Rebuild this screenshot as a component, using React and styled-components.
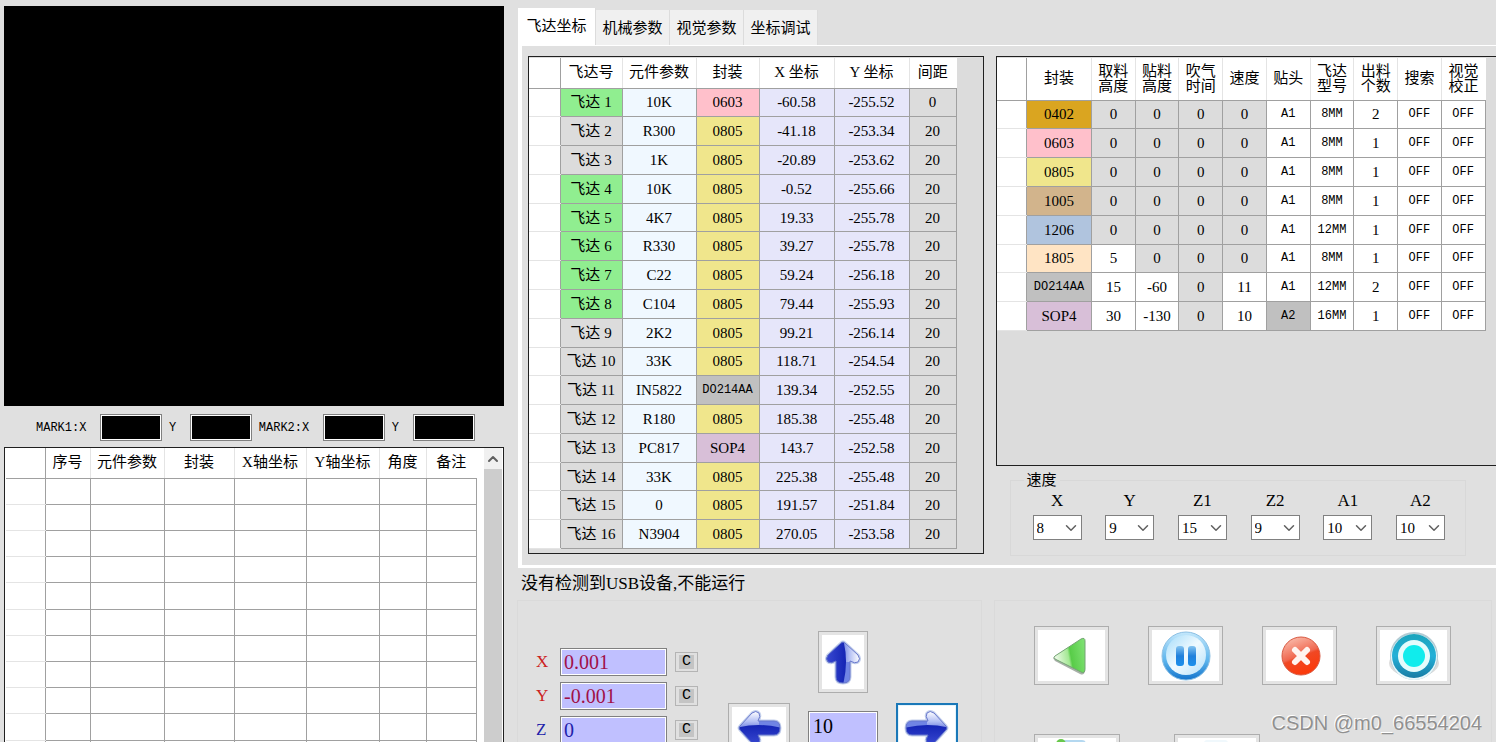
import { useState } from "react"
import styled, { createGlobalStyle } from "styled-components"
import { ChevronDown, ChevronUp } from "lucide-react"

const packageColors = {
    "0402": "#daa520",
    "0603": "#ffc0cb",
    "0805": "#f0e68c",
    "1005": "#d2b48c",
    "1206": "#b0c4de",
    "1805": "#ffe4c4",
    "DO214AA": "#c0c0c0",
    "SOP4": "#d8bfd8"
}

const tabs = ["飞达坐标", "机械参数", "视觉参数", "坐标调试"]

const feeders = [
    ["10K", "0603", "-60.58", "-255.52", "0", true],
    ["R300", "0805", "-41.18", "-253.34", "20", false],
    ["1K", "0805", "-20.89", "-253.62", "20", false],
    ["10K", "0805", "-0.52", "-255.66", "20", true],
    ["4K7", "0805", "19.33", "-255.78", "20", true],
    ["R330", "0805", "39.27", "-255.78", "20", true],
    ["C22", "0805", "59.24", "-256.18", "20", true],
    ["C104", "0805", "79.44", "-255.93", "20", true],
    ["2K2", "0805", "99.21", "-256.14", "20", false],
    ["33K", "0805", "118.71", "-254.54", "20", false],
    ["IN5822", "DO214AA", "139.34", "-252.55", "20", false],
    ["R180", "0805", "185.38", "-255.48", "20", false],
    ["PC817", "SOP4", "143.7", "-252.58", "20", false],
    ["33K", "0805", "225.38", "-255.48", "20", false],
    ["0", "0805", "191.57", "-251.84", "20", false],
    ["N3904", "0805", "270.05", "-253.58", "20", false]
]

const packages = [
    ["0402", "0", "0", "0", "0", "A1", "8MM", "2"],
    ["0603", "0", "0", "0", "0", "A1", "8MM", "1"],
    ["0805", "0", "0", "0", "0", "A1", "8MM", "1"],
    ["1005", "0", "0", "0", "0", "A1", "8MM", "1"],
    ["1206", "0", "0", "0", "0", "A1", "12MM", "1"],
    ["1805", "5", "0", "0", "0", "A1", "8MM", "1"],
    ["DO214AA", "15", "-60", "0", "11", "A1", "12MM", "2"],
    ["SOP4", "30", "-130", "0", "10", "A2", "16MM", "1"]
]

const speeds = [["X", "8"], ["Y", "9"], ["Z1", "15"], ["Z2", "9"], ["A1", "10"], ["A2", "10"]]

const axes = [
    { name: "X", value: "0.001", color: "#cc2222", ink: "#a01048" },
    { name: "Y", value: "-0.001", color: "#cc2222", ink: "#a01048" },
    { name: "Z", value: "0", color: "#2222aa", ink: "#2222aa" }
]

const arrowShape = "M17 4 Q19 2 21 4 L34 16 Q37 20 34 23 Q31 25 26 22 V38 Q26 44 19 44 Q12 44 12 38 V22 Q7 25 4 23 Q1 20 4 16Z"

const arrowTurns = {
    up: undefined,
    left: "translate(0 38) rotate(-90)",
    right: "translate(46 38) scale(-1 1) rotate(-90)"
}

function Arrow({ to }) {
    const width = to === "up" ? 38 : 46
    const height = to === "up" ? 46 : 38
    return (
        <svg width={width} height={height} viewBox={`0 0 ${width} ${height}`} aria-hidden="true">
            <defs>
                <linearGradient id={"light" + to} x1="0.4" x2="1" y1="0" y2="0">
                    <stop offset="0" stopColor="#5468d8" />
                    <stop offset="0.5" stopColor="#b4c0f4" />
                    <stop offset="1" stopColor="#ffffff" />
                </linearGradient>
                <linearGradient id={"dark" + to} x1="0" x2="1" y1="0" y2="0">
                    <stop offset="0" stopColor="#3c4cd4" />
                    <stop offset="1" stopColor="#1424b4" />
                </linearGradient>
                <clipPath id={"clip" + to}>
                    <path d={arrowShape} />
                </clipPath>
            </defs>
            <g transform={arrowTurns[to]}>
                <path d={arrowShape} fill="none" stroke="#c4d0ec" strokeWidth="3" />
                <path d={arrowShape} fill={"url(#light" + to + ")"} />
                <g clipPath={"url(#clip" + to + ")"}>
                    <rect x="18" y="23" width="9" height="22" fill="#7084e4" />
                    <path d="M0 0 H19 Q25 22 19 46 H0Z" fill={"url(#dark" + to + ")"} />
                </g>
                <path d={arrowShape} fill="none" stroke="#6878cc" />
            </g>
        </svg>
    )
}

function PlayBack() {
    return (
        <svg width="50" height="50" viewBox="0 0 50 50" aria-hidden="true">
            <defs>
                <linearGradient id="green" x1="0" x2="1" y1="0.6" y2="0.4">
                    <stop offset="0" stopColor="#f4fcf0" />
                    <stop offset="0.46" stopColor="#a4e894" />
                    <stop offset="0.54" stopColor="#58cc48" />
                    <stop offset="1" stopColor="#7ce070" />
                </linearGradient>
            </defs>
            <path d="M6 27 L8 30 L33 43 Q37 45 38 40 V12 L36 9Z" fill="#a8b0a8" />
            <path d="M8 25 L34 8 Q38 6 38 10 V38 Q38 43 34 41 L8 28 Q6 26 8 25Z" fill="url(#green)" stroke="#74a474" />
        </svg>
    )
}

function Pause() {
    return (
        <svg width="50" height="50" viewBox="0 0 50 50" aria-hidden="true">
            <defs>
                <linearGradient id="blueRing" x1="0" x2="0" y1="0" y2="1">
                    <stop offset="0" stopColor="#c4e8fc" />
                    <stop offset="0.6" stopColor="#5cb4ec" />
                    <stop offset="1" stopColor="#1474cc" />
                </linearGradient>
                <linearGradient id="blueFace" x1="0" x2="1" y1="0" y2="1">
                    <stop offset="0" stopColor="#a4dcfa" />
                    <stop offset="0.5" stopColor="#f0faff" />
                    <stop offset="1" stopColor="#b4e0fa" />
                </linearGradient>
                <linearGradient id="blueBar" x1="0" x2="0" y1="0" y2="1">
                    <stop offset="0" stopColor="#84c4f0" />
                    <stop offset="0.5" stopColor="#2080dc" />
                    <stop offset="1" stopColor="#1c90ec" />
                </linearGradient>
            </defs>
            <circle cx="25" cy="25" r="24" fill="url(#blueRing)" stroke="#8cc0e4" />
            <circle cx="25" cy="24" r="20" fill="url(#blueFace)" />
            <rect x="15" y="15" width="8" height="20" rx="3" fill="url(#blueBar)" />
            <rect x="27" y="15" width="8" height="20" rx="3" fill="url(#blueBar)" />
        </svg>
    )
}

function Cancel() {
    return (
        <svg width="50" height="50" viewBox="0 0 50 50" aria-hidden="true">
            <defs>
                <linearGradient id="red" x1="0.2" x2="0.6" y1="0" y2="1">
                    <stop offset="0" stopColor="#fac0b0" />
                    <stop offset="0.5" stopColor="#f06850" />
                    <stop offset="0.56" stopColor="#f04824" />
                    <stop offset="1" stopColor="#fc3808" />
                </linearGradient>
            </defs>
            <circle cx="26" cy="25" r="19" fill="url(#red)" stroke="#d85840" />
            <path d="M20 19 L32 31 M32 19 L20 31" stroke="#fff4f0" strokeWidth="6" strokeLinecap="round" />
        </svg>
    )
}

function Target() {
    return (
        <svg width="50" height="50" viewBox="0 0 50 50" aria-hidden="true">
            <defs>
                <linearGradient id="teal" x1="0" x2="0" y1="0" y2="1">
                    <stop offset="0" stopColor="#1ca4bc" />
                    <stop offset="0.5" stopColor="#24b0d8" />
                    <stop offset="1" stopColor="#187ca4" />
                </linearGradient>
            </defs>
            <ellipse cx="25" cy="32" rx="25" ry="14" fill="#dcdcdc" />
            <circle cx="25" cy="25" r="24" fill="#b4ccd4" />
            <circle cx="25" cy="26" r="23" fill="#e8f8fc" />
            <circle cx="25" cy="25" r="22" fill="url(#teal)" />
            <circle cx="25" cy="25" r="16" fill="#e4fcfc" />
            <circle cx="25" cy="25" r="11" fill="#10ecec" />
        </svg>
    )
}

function Marks() {
    return (
        <MarkRow>
            {["MARK1:X", "Y", "MARK2:X", "Y"].map((value, index) => (
                <MarkLabel key={index}>
                    <span>{value}</span>
                    <MarkInput readOnly />
                </MarkLabel>
            ))}
        </MarkRow>
    )
}

function PlacementList() {
    return (
        <ListPanel>
            <PlacementTable>
                <colgroup>
                    <Col $w={39} /><Col $w={45} /><Col $w={74} /><Col $w={70} />
                    <Col $w={72} /><Col $w={73} /><Col $w={47} /><Col $w={50} />
                </colgroup>
                <thead>
                    <tr>
                        <Corner />
                        {["序号", "元件参数", "封装", "X轴坐标", "Y轴坐标", "角度", "备注"].map(value => <Head key={value}>{value}</Head>)}
                    </tr>
                </thead>
                <tbody>
                    {Array.from({ length: 11 }, (_, row) => (
                        <tr key={row}>
                            <RowHead />
                            {Array.from({ length: 7 }, (_, cell) => <Cell key={cell} $bg="#fff" />)}
                        </tr>
                    ))}
                </tbody>
            </PlacementTable>
            <ScrollBar>
                <ScrollButton aria-label="向上滚动"><ChevronUp size={16} strokeWidth={3} color="#606060" /></ScrollButton>
            </ScrollBar>
        </ListPanel>
    )
}

function FeederTable() {
    return (
        <FeederGrid>
            <colgroup>
                <Col $w={31} /><Col $w={62} /><Col $w={74} /><Col $w={63} />
                <Col $w={75} /><Col $w={75} /><Col $w={47} />
            </colgroup>
            <thead>
                <tr>
                    <Corner />
                    {["飞达号", "元件参数", "封装", "X 坐标", "Y 坐标", "间距"].map(value => <Head key={value}>{value}</Head>)}
                </tr>
            </thead>
            <tbody>
                {feeders.map(([part, pack, x, y, gap, active], index) => (
                    <tr key={index}>
                        <RowHead />
                        <Cell $bg={active ? "#90ee90" : "#dcdcdc"}>飞达 {index + 1}</Cell>
                        <Cell $bg="#f0f8ff">{part}</Cell>
                        <Cell $bg={packageColors[pack]} $mono={pack === "DO214AA"}>{pack}</Cell>
                        <Cell $bg="#e6e6fa">{x}</Cell>
                        <Cell $bg="#e6e6fa">{y}</Cell>
                        <Cell $bg="#dcdcdc">{gap}</Cell>
                    </tr>
                ))}
            </tbody>
        </FeederGrid>
    )
}

function PackageTable() {
    const heads = [["封装"], ["取料", "高度"], ["贴料", "高度"], ["吹气", "时间"], ["速度"], ["贴头"], ["飞达", "型号"], ["出料", "个数"], ["搜索"], ["视觉", "校正"]]
    const number = value => value === "0" ? "#dcdcdc" : "#fff"

    return (
        <PackageGrid>
            <colgroup>
                <Col $w={30} /><Col $w={65} />
            </colgroup>
            <thead>
                <tr>
                    <Corner />
                    {heads.map((lines, index) => (
                        <Head key={index}>{lines[0]}{lines[1] && <><br />{lines[1]}</>}</Head>
                    ))}
                </tr>
            </thead>
            <tbody>
                {packages.map(([pack, pick, place, blow, speed, head, type, count]) => (
                    <tr key={pack}>
                        <RowHead />
                        <Cell $bg={packageColors[pack]} $mono={pack === "DO214AA"}>{pack}</Cell>
                        <Cell $bg={number(pick)}>{pick}</Cell>
                        <Cell $bg={number(place)}>{place}</Cell>
                        <Cell $bg={number(blow)}>{blow}</Cell>
                        <Cell $bg={number(speed)}>{speed}</Cell>
                        <Cell $bg={head === "A2" ? "#c0c0c0" : "#fff"} $mono>{head}</Cell>
                        <Cell $bg="#fff" $mono>{type}</Cell>
                        <Cell $bg="#fff">{count}</Cell>
                        <Cell $bg="#fff" $mono>OFF</Cell>
                        <Cell $bg="#fff" $mono>OFF</Cell>
                    </tr>
                ))}
            </tbody>
        </PackageGrid>
    )
}

function SpeedBox() {
    return (
        <SpeedGroup>
            <legend>速度</legend>
            <SpeedRow>
                {speeds.map(([name, value]) => (
                    <SpeedLabel key={name}>
                        <span>{name}</span>
                        <SelectWrap>
                            <select defaultValue={value}>
                                {Array.from({ length: 20 }, (_, index) => <option key={index}>{index + 1}</option>)}
                            </select>
                            <ChevronDown size={18} color="#606060" strokeWidth={2} />
                        </SelectWrap>
                    </SpeedLabel>
                ))}
            </SpeedRow>
        </SpeedGroup>
    )
}

function Motion() {
    return (
        <MotionGroup>
            <Axes>
                {axes.map(({ name, value, color, ink }) => (
                    <Axis key={name}>
                        <AxisName htmlFor={"axis" + name} $color={color}>{name}</AxisName>
                        <AxisInput id={"axis" + name} defaultValue={value} $ink={ink} />
                        <ClearButton aria-label={"清零 " + name}><span>C</span></ClearButton>
                    </Axis>
                ))}
            </Axes>
            <Pad>
                <UpButton aria-label="上"><Arrow to="up" /></UpButton>
                <SideButton aria-label="左"><Arrow to="left" /></SideButton>
                <StepInput aria-label="步距" defaultValue="10" />
                <SideButton aria-label="右" $focused><Arrow to="right" /></SideButton>
            </Pad>
        </MotionGroup>
    )
}

function RunControls() {
    return (
        <RunGroup>
            <RunRow>
                <RunButton aria-label="开始"><PlayBack /></RunButton>
                <RunButton aria-label="暂停"><Pause /></RunButton>
                <RunButton aria-label="停止"><Cancel /></RunButton>
                <RunButton aria-label="归位"><Target /></RunButton>
            </RunRow>
            <FileRow>
                <FileButton aria-label="打开">
                    <svg width="46" height="40" viewBox="0 0 46 40" aria-hidden="true">
                        <rect x="4" y="1" width="28" height="36" rx="4" fill="#b4d8f0" />
                        <circle cx="7" cy="5" r="5" fill="#68c84c" />
                    </svg>
                </FileButton>
                <FileButton aria-label="保存">
                    <svg width="46" height="40" viewBox="0 0 46 40" aria-hidden="true">
                        <rect x="10" y="1" width="24" height="36" rx="3" fill="#f0f8fc" />
                    </svg>
                </FileButton>
            </FileRow>
        </RunGroup>
    )
}

export default function App() {

    const [tab, setTab] = useState(tabs[0])

    return (
        <>
            <GlobalStyle />
            <Page>
                <Left>
                    <Video />
                    <Marks />
                    <PlacementList />
                </Left>
                <Right>
                    <Tabs role="tablist">
                        {tabs.map(value => (
                            <Tab key={value} role="tab" aria-selected={tab === value} $active={tab === value} onClick={() => setTab(value)}>{value}</Tab>
                        ))}
                    </Tabs>
                    <Pane>
                        <Panel><FeederTable /></Panel>
                        <PackageSide>
                            <PackagePanel><PackageTable /></PackagePanel>
                            <SpeedBox />
                        </PackageSide>
                    </Pane>
                    <Status>没有检测到USB设备,不能运行</Status>
                    <Bottom>
                        <Motion />
                        <RunControls />
                    </Bottom>
                </Right>
                <Watermark>CSDN @m0_66554204</Watermark>
            </Page>
        </>
    )
}

const GlobalStyle = createGlobalStyle`
    * {
        box-sizing: border-box;
    }
    body {
        margin: 0;
        background-color: #e0e0e0;
        color: #000;
        font-family: "Liberation Serif", "Noto Sans CJK SC", serif;
        font-size: 15px;
    }
    button, input, select {
        font: inherit;
        color: inherit;
        margin: 0;
        padding: 0;
        border-radius: 0;
    }
`
const Page = styled.main`
    position: relative;
    height: 100vh;
    overflow: hidden;
    display: grid;
    grid-template-columns: minmax(0, 500fr) minmax(0, 979fr);
    gap: 13px;
    padding: 6px 0 0 4px;
`
const Left = styled.section`
    min-width: 0;
`
const Right = styled.section`
    min-width: 0;
    display: flex;
    flex-direction: column;
`
const Video = styled.div`
    aspect-ratio: 5 / 4;
    background-color: #000;
`
const MarkRow = styled.div`
    height: 41px;
    padding: 2px 29px 0 32px;
    display: flex;
    justify-content: space-between;
    align-items: center;
`
const MarkLabel = styled.label`
    display: flex;
    align-items: center;
    gap: 14px;
    font-family: "Liberation Mono", monospace;
    font-size: 12px;
`
const MarkInput = styled.input`
    width: 62px;
    height: 27px;
    border: 1px solid #808080;
    background-color: #000;
    box-shadow: inset 0 0 0 1px #fff;
`
const ListPanel = styled.div`
    display: flex;
    justify-content: space-between;
    border: 1px solid #202020;
    padding: 0 1px;
    background-color: #fff;
`
const Col = styled.col`
    width: ${props => props.$w}px;
`
const Table = styled.table`
    border-collapse: collapse;
    table-layout: fixed;
    background-color: #fff;
`
const PlacementTable = styled(Table)`
    width: 470px;
    height: 319px;
`
const FeederGrid = styled(Table)`
    width: 427px;
    height: 491px;
`
const PackageGrid = styled(Table)`
    width: 489px;
    height: 273px;

    th {
        height: 42px;
    }
`
const Head = styled.th`
    height: 30px;
    padding: 0;
    border-left: 1px solid #e4e4e4;
    border-bottom: 1px solid #a0a0a0;
    font-weight: normal;
    line-height: 15px;
    white-space: nowrap;
`
const Corner = styled.td`
    padding: 0;
    border-right: 1px solid #a0a0a0;
    border-bottom: 1px solid #a0a0a0;
`
const RowHead = styled.td`
    padding: 0;
    border-bottom: 1px solid #e4e4e4;
`
const Cell = styled.td`
    padding: 0;
    border: 1px solid #a0a0a0;
    background-color: ${props => props.$bg};
    font-family: ${props => props.$mono ? '"Liberation Mono", monospace' : "inherit"};
    font-size: ${props => props.$mono ? 12 : 15}px;
    line-height: 20px;
    text-align: center;
    white-space: nowrap;
`
const ScrollBar = styled.div`
    width: 18px;
    background-color: #cdcdcd;
`
const ScrollButton = styled.button`
    width: 18px;
    height: 21px;
    border: none;
    background-color: #f0f0f0;
    display: flex;
    align-items: center;
    justify-content: center;
`
const Tabs = styled.div`
    display: flex;
    align-items: flex-end;
    height: 39px;
    padding: 2px 0 0 1px;
`
const Tab = styled.button`
    width: ${props => props.$active ? 78 : 74}px;
    height: ${props => props.$active ? 37 : 35}px;
    padding-bottom: ${props => props.$active ? 4 : 2}px;
    border: none;
    border-right: 1px solid #dcdcdc;
    background-color: ${props => props.$active ? "#fff" : "#f0f0f0"};
`
const Pane = styled.div`
    display: grid;
    grid-template-columns: minmax(0, 456fr) minmax(0, 501fr);
    gap: 12px;
    margin-left: 1px;
    padding: 10px 0 9px 6px;
    border: solid #fff;
    border-width: 1px 0 3px 4px;
`
const Panel = styled.div`
    height: 498px;
    padding-top: 1px;
    border: 1px solid #202020;
    background-color: #dcdcdc;
    overflow: hidden;
`
const PackageSide = styled.div`
    min-width: 0;
`
const PackagePanel = styled(Panel)`
    height: 410px;
    border-right: none;
`
const SpeedGroup = styled.fieldset`
    margin: 5px 30px 0 14px;
    padding: 0 11px 15px 13px;
    min-width: 0;
    border: 1px solid #d8d8d8;

    legend {
        padding: 0 3px;
        line-height: 18px;
    }
`
const SpeedRow = styled.div`
    display: flex;
    justify-content: space-between;
    padding: 0 9px;
`
const SpeedLabel = styled.label`
    display: flex;
    flex-direction: column;
    align-items: center;
    gap: 2px;
    font-size: 17px;
    line-height: 24px;
`
const SelectWrap = styled.span`
    display: grid;
    align-items: center;
    justify-items: end;

    select {
        grid-area: 1 / 1;
        appearance: none;
        width: 49px;
        height: 25px;
        padding-left: 3px;
        border: 1px solid #808080;
        background-color: #fff;
        font-size: 15px;
    }
    svg {
        grid-area: 1 / 1;
        margin-right: 2px;
        pointer-events: none;
    }
`
const Status = styled.p`
    margin: 0;
    padding: 4px 0 0 4px;
    font-size: 17px;
    line-height: 24px;
`
const Bottom = styled.div`
    flex: 1;
    display: grid;
    grid-template-columns: minmax(0, 465fr) minmax(0, 498fr);
    gap: 12px;
    padding: 4px 4px 0 0;
`
const MotionGroup = styled.div`
    border: 1px solid #dadada;
    border-bottom: none;
    display: flex;
    gap: 30px;
    padding: 30px 0 0 18px;
`
const Axes = styled.div`
    display: flex;
    flex-direction: column;
    gap: 6px;
    padding-top: 17px;
`
const Axis = styled.div`
    display: flex;
    align-items: center;
`
const AxisName = styled.label`
    width: 24px;
    font-size: 17px;
    color: ${props => props.$color};
`
const AxisInput = styled.input`
    width: 107px;
    height: 28px;
    padding-left: 3px;
    border: 1px solid #808080;
    background-color: #c0c0ff;
    box-shadow: inset 0 0 0 1px #fff;
    font-size: 20px;
    color: ${props => props.$ink};
`
const ClearButton = styled.button`
    width: 23px;
    height: 20px;
    margin-left: 8px;
    border: 1px solid #b4b4b4;
    background-color: #e0e0e0;
    display: flex;
    align-items: center;
    justify-content: center;

    span {
        width: 15px;
        background-color: #c4c4c4;
        font-family: "Liberation Mono", monospace;
        font-size: 15px;
        line-height: 14px;
    }
`
const Pad = styled.div`
    display: grid;
    grid-template-columns: 62px 70px 62px;
    grid-auto-rows: max-content;
    gap: 10px 18px;
    align-items: center;
    justify-items: center;
`
const IconButton = styled.button`
    display: flex;
    align-items: center;
    justify-content: center;
    border: 1px solid #adadad;
    background-color: #fff;
    box-shadow: inset 0 0 0 3px #e4e4e4;
`
const UpButton = styled(IconButton)`
    grid-column: 1 / -1;
    width: 50px;
    height: 62px;
`
const SideButton = styled(IconButton)`
    width: 62px;
    height: 50px;
    border: ${props => props.$focused ? "2px solid #1a78b8" : "1px solid #adadad"};
    box-shadow: ${props => props.$focused ? "inset 0 0 0 1px #e4f4fc" : "inset 0 0 0 3px #e4e4e4"};
`
const StepInput = styled.input`
    width: 70px;
    height: 34px;
    padding: 0 0 4px 4px;
    border: 1px solid #808080;
    background-color: #c0c0ff;
    box-shadow: inset 0 0 0 1px #fff;
    font-size: 20px;
`
const RunGroup = styled.div`
    border: 1px solid #dadada;
    border-bottom: none;
    padding: 25px 0 0 39px;
`
const RunRow = styled.div`
    display: flex;
    gap: 39px;
`
const RunButton = styled(IconButton)`
    width: 75px;
    height: 59px;
`
const FileRow = styled.div`
    display: flex;
    gap: 54px;
    margin-top: 49px;
`
const FileButton = styled(IconButton)`
    width: 86px;
    height: 50px;
`
const Watermark = styled.div`
    position: absolute;
    right: 14px;
    bottom: 7px;
    font-family: "Liberation Sans", sans-serif;
    font-size: 20px;
    line-height: 24px;
    color: #909090;
    text-shadow: -1px -1px 0 #fff;
`
